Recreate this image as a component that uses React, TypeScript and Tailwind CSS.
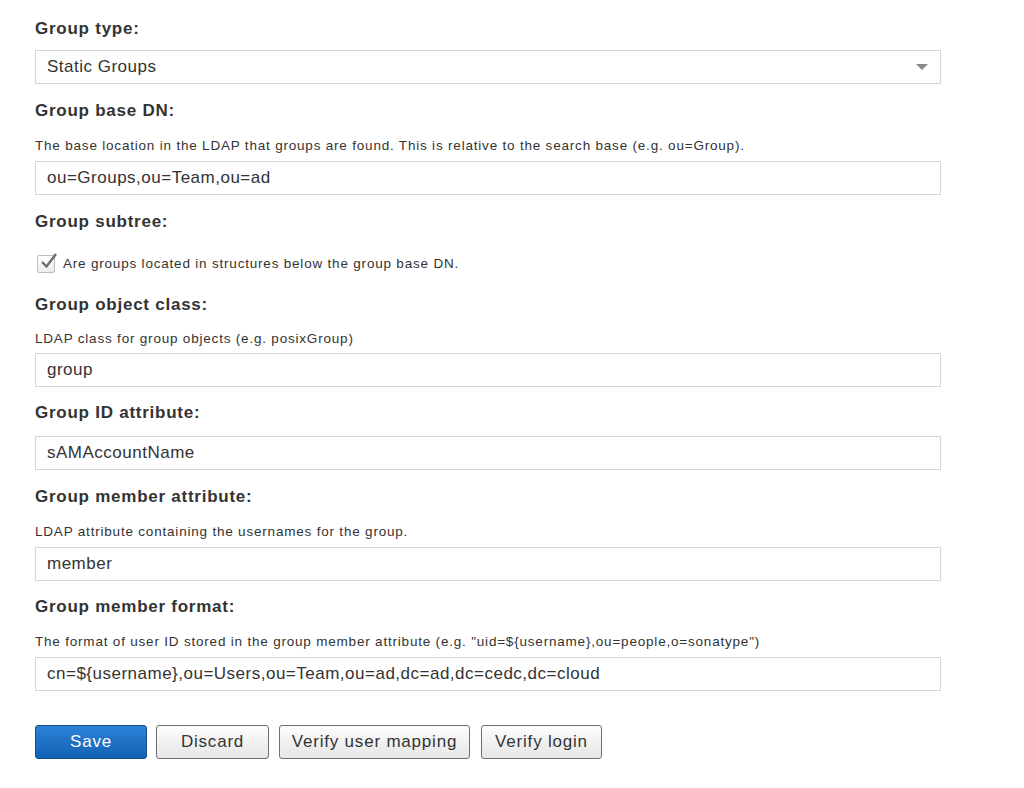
import React from "react";

const font = { fontFamily: '"Liberation Sans", Arial, sans-serif' };

function Label({ children }: { children: React.ReactNode }) {
  return (
    <div className="h-5 flex items-center text-[17px] font-bold text-[#333] leading-5 tracking-[0.75px]">{children}</div>
  );
}

function Help({ children, tight }: { children: React.ReactNode; tight?: boolean }) {
  return (
    <div
      className={`h-[14px] flex items-center text-[13.5px] text-[#333] leading-[14px] whitespace-nowrap tracking-[0.8px] ${
        tight ? "mt-[17px]" : "mt-[18px]"
      }`}
    >
      {children}
    </div>
  );
}

function Input({ value }: { value: string }) {
  return (
    <div className="h-[34px] w-[906px] border border-[#d6d6d6] bg-white flex items-center pl-[11px] text-[17px] text-[#333] whitespace-nowrap tracking-[0.5px]">
      {value}
    </div>
  );
}

function Btn({ children, primary, w }: { children: React.ReactNode; primary?: boolean; w: string }) {
  return (
    <button
      className={
        primary
          ? `h-[34px] ${w} rounded-[3px] border border-[#174f8a] bg-gradient-to-b from-[#2b82d6] to-[#1262b5] text-white text-[17px] tracking-[0.8px]`
          : `h-[34px] ${w} rounded-[3px] border border-[#6f6f6f] bg-gradient-to-b from-[#fdfdfd] to-[#e6e6e6] text-[#333] text-[17px] tracking-[0.8px]`
      }
      style={font}
    >
      {children}
    </button>
  );
}

export default function App() {
  return (
    <div className="w-[1024px] h-[788px] bg-white pl-[35px] pt-[19px]" style={font}>
      <Label>Group type:</Label>
      <div className="mt-[11px] h-[34px] w-[906px] border border-[#d6d6d6] bg-white flex items-center justify-between pl-[11px] pr-[12px] text-[17px] text-[#333] tracking-[0.5px]">
        <span>Static Groups</span>
        <svg width="12" height="7" viewBox="0 0 12 7">
          <path d="M0 0 L12 0 L6 6 Z" fill="#8a8a8a" />
        </svg>
      </div>

      <div className="mt-[17px]">
        <Label>Group base DN:</Label>
        <Help>The base location in the LDAP that groups are found. This is relative to the search base (e.g. ou=Group).</Help>
        <div className="mt-[8px]">
          <Input value="ou=Groups,ou=Team,ou=ad" />
        </div>
      </div>

      <div className="mt-[17px]">
        <Label>Group subtree:</Label>
        <div className="mt-[22px] h-5 flex items-center gap-[8px]">
          <span className="w-[18px] h-[18px] ml-[2px] border border-[#bdbdbd] rounded-[2px] bg-gradient-to-b from-white to-[#ececec] relative">
            <svg className="absolute -top-[5px] left-[1px]" width="20" height="20" viewBox="0 0 20 20">
              <path d="M3 11 L7.5 15.5 L17 3" fill="none" stroke="#6b6b6b" strokeWidth="2.4" />
            </svg>
          </span>
          <span className="text-[13.5px] text-[#333] tracking-[0.8px]">Are groups located in structures below the group base DN.</span>
        </div>
      </div>

      <div className="mt-[21px]">
        <Label>Group object class:</Label>
        <Help tight>LDAP class for group objects (e.g. posixGroup)</Help>
        <div className="mt-[7px]">
          <Input value="group" />
        </div>
      </div>

      <div className="mt-[16px]">
        <Label>Group ID attribute:</Label>
        <div className="mt-[13px]">
          <Input value="sAMAccountName" />
        </div>
      </div>

      <div className="mt-[17px]">
        <Label>Group member attribute:</Label>
        <Help>LDAP attribute containing the usernames for the group.</Help>
        <div className="mt-[8px]">
          <Input value="member" />
        </div>
      </div>

      <div className="mt-[16px]">
        <Label>Group member format:</Label>
        <Help>The format of user ID stored in the group member attribute (e.g. "uid=${"{"}username{"}"},ou=people,o=sonatype")</Help>
        <div className="mt-[8px]">
          <Input value="cn=${username},ou=Users,ou=Team,ou=ad,dc=ad,dc=cedc,dc=cloud" />
        </div>
      </div>

      <div className="mt-[34px] flex">
        <Btn primary w="w-[112px]">Save</Btn>
        <div className="ml-[9px]"><Btn w="w-[113px]">Discard</Btn></div>
        <div className="ml-[10px]"><Btn w="w-[191px]">Verify user mapping</Btn></div>
        <div className="ml-[11px]"><Btn w="w-[121px]">Verify login</Btn></div>
      </div>
    </div>
  );
}
